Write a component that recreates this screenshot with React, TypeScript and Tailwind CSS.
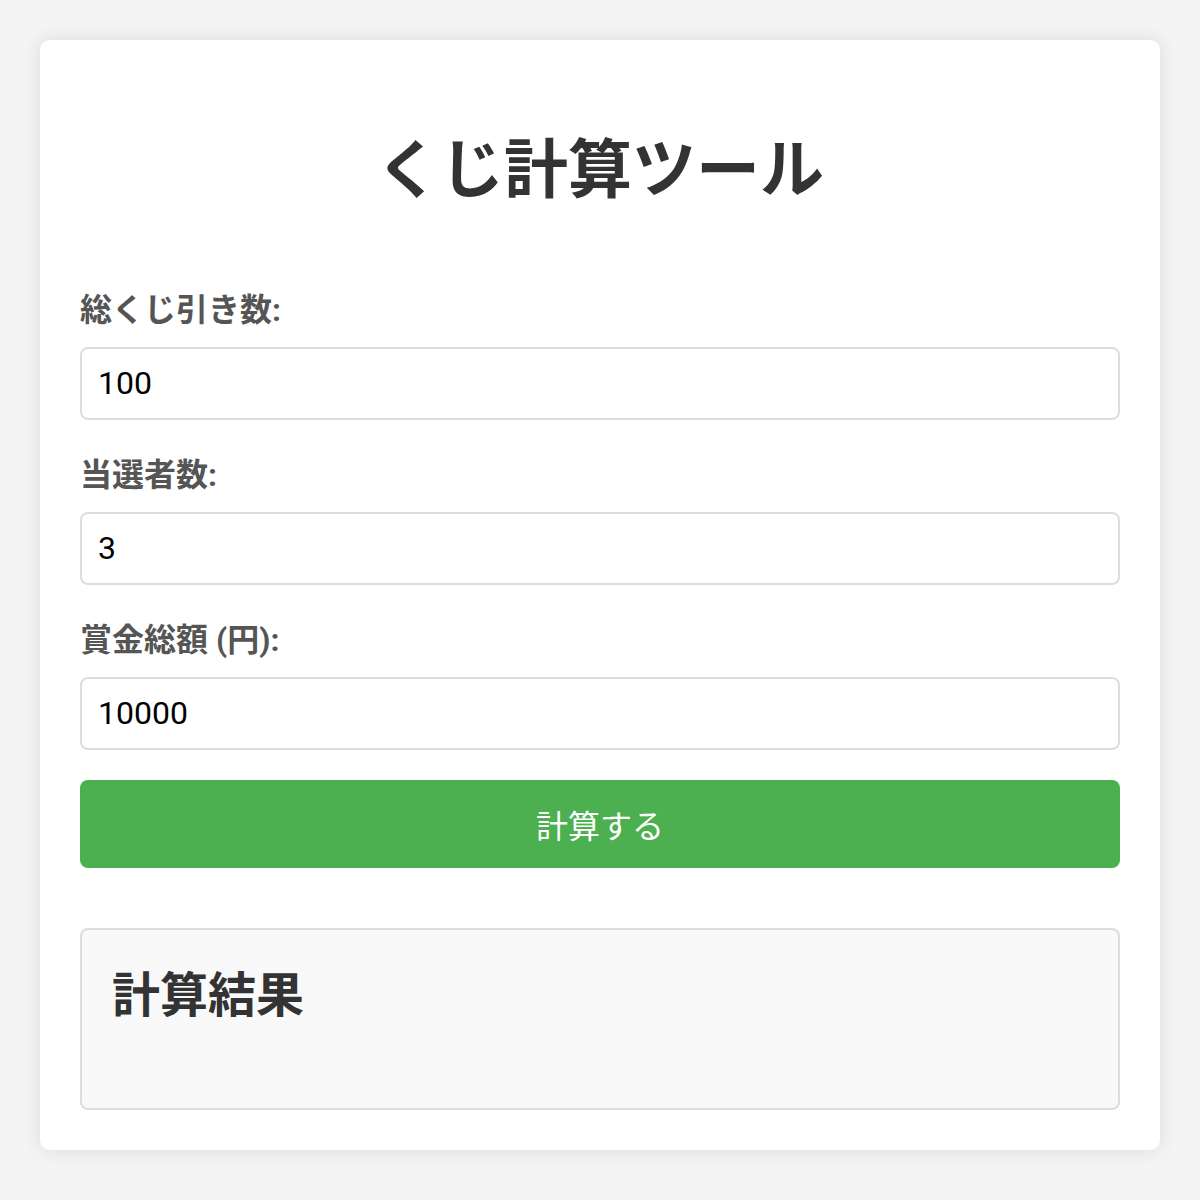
import { useState } from 'react';

const font = { fontFamily: 'Roboto, "Noto Sans CJK JP", sans-serif' };

function Field({ label, value, onChange }: { label: string; value: string; onChange: (v: string) => void }) {
  return (
    <div className="mb-[31px]">
      <label className="block text-[32px] leading-[48px] font-bold text-[#555] mb-[13px]">{label}</label>
      <input
        type="number"
        value={value}
        onChange={(e) => onChange(e.target.value)}
        className="block w-full h-[73px] px-[16px] pb-[2px] text-[32px] text-black bg-white border-2 border-[#ddd] rounded-[8px] outline-none"
      />
    </div>
  );
}

export default function App() {
  const [total, setTotal] = useState('100');
  const [winners, setWinners] = useState('3');
  const [prize, setPrize] = useState('10000');

  return (
    <div className="min-h-screen bg-[#f4f4f4] pt-[40px] pb-[50px]" style={font}>
      <div className="mx-[40px] bg-white rounded-[10px] shadow-[0_0_20px_rgba(0,0,0,0.1)] p-[40px]">
        {/* Title */}
        <h1 className="mt-[43px] mb-[67px] text-center text-[64px] leading-[96px] font-bold text-[#333]">
          くじ計算ツール
        </h1>

        <Field label="総くじ引き数:" value={total} onChange={setTotal} />
        <Field label="当選者数:" value={winners} onChange={setWinners} />
        <Field label="賞金総額 (円):" value={prize} onChange={setPrize} />

        <button className="block w-full h-[88px] -mt-px pt-[5px] bg-[#4caf50] text-white text-[32px] rounded-[8px]">
          計算する
        </button>

        {/* Result */}
        <div className="mt-[60px] h-[182px] bg-[#f9f9f9] border-2 border-[#ddd] rounded-[8px] px-[30px] pt-[34px]">
          <h2 className="text-[48px] leading-[64px] font-bold text-[#333]">計算結果</h2>
        </div>
      </div>
    </div>
  );
}
